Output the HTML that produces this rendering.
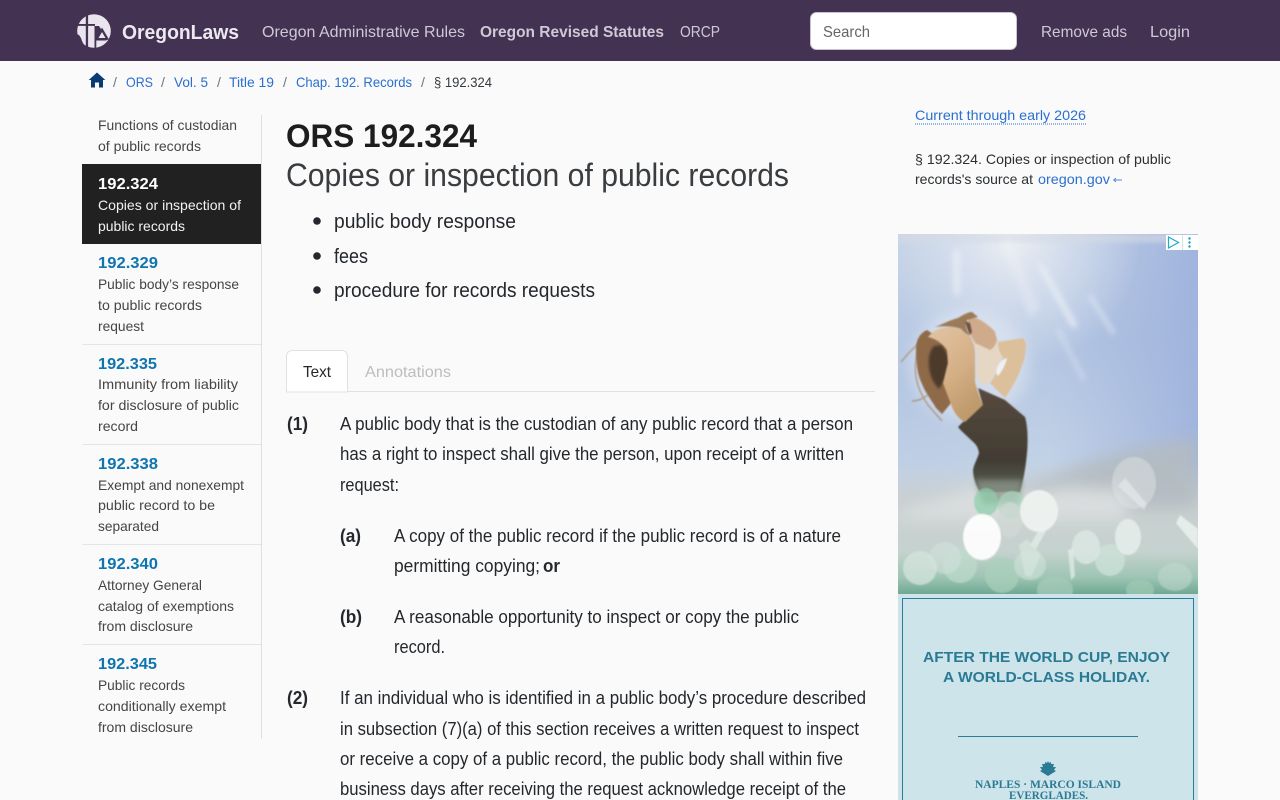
<!DOCTYPE html>
<html lang="en">
<head>
<meta charset="utf-8">
<title>ORS 192.324 - Copies or inspection of public records</title>
<style>
html,body{margin:0;padding:0;width:1280px;height:800px;overflow:hidden;background:#fafafa}
svg{position:absolute;left:0;top:0;display:block}
text{font-family:"Liberation Sans",sans-serif;white-space:pre}
.nav{font-size:16px;fill:#cfc9d6}
.bc{font-size:14px;fill:#2a6fd0}
.sep{font-size:14px;fill:#6c757d}
.s{font-size:14px;fill:#454545}
.n{font-size:16px;font-weight:700;fill:#0f75b0}
.b{font-size:18px;fill:#24282c}
.bb{font-size:18px;font-weight:700;fill:#24282c}
.li{font-size:20px;fill:#24282c}
.r{font-size:14px;fill:#2b2f33}
.ad{font-size:15px;font-weight:700;fill:#2b7a94}
.ads{font-size:12px;font-weight:700;fill:#2b7a94;font-family:"Liberation Serif",serif}
</style>
</head>
<body>
<svg width="1280" height="800" viewBox="0 0 1280 800" xmlns="http://www.w3.org/2000/svg">
<defs>
<linearGradient id="sky" x1="0" y1="0" x2="0.15" y2="1">
<stop offset="0" stop-color="#c3d1e6"/><stop offset="0.4" stop-color="#b4c6e2"/><stop offset="0.7" stop-color="#c2d2e6"/><stop offset="1" stop-color="#cdd8e2"/>
</linearGradient>
<linearGradient id="skyr" x1="0" y1="0" x2="1" y2="0">
<stop offset="0.5" stop-color="#a3b5de" stop-opacity="0"/><stop offset="1" stop-color="#9db1dc" stop-opacity=".9"/>
</linearGradient>
<radialGradient id="glow" gradientUnits="userSpaceOnUse" cx="1010" cy="240" r="130">
<stop offset="0" stop-color="#eef0f4" stop-opacity=".95"/><stop offset="0.5" stop-color="#dfe6f1" stop-opacity=".55"/><stop offset="1" stop-color="#dfe6f1" stop-opacity="0"/>
</radialGradient>
<linearGradient id="ground" x1="0" y1="0" x2="0" y2="1">
<stop offset="0" stop-color="#c9d0d2" stop-opacity="0"/><stop offset="0.3" stop-color="#c9cfd0"/><stop offset="0.68" stop-color="#c6d2cf"/><stop offset="0.88" stop-color="#9cc4b3"/><stop offset="1" stop-color="#6fa893"/>
</linearGradient>
<linearGradient id="skin" x1="0" y1="0" x2="0.5" y2="1">
<stop offset="0" stop-color="#e2c5a4"/><stop offset="0.6" stop-color="#d4ae84"/><stop offset="1" stop-color="#bf9a6c"/>
</linearGradient>
<linearGradient id="dress" x1="0" y1="0" x2="0" y2="1">
<stop offset="0" stop-color="#57493d"/><stop offset="0.7" stop-color="#423c33"/><stop offset="1" stop-color="#5d6458"/>
</linearGradient>
<filter id="bl0" x="-30%" y="-30%" width="160%" height="160%"><feGaussianBlur stdDeviation="0.7"/></filter>
<filter id="bl1" x="-30%" y="-30%" width="160%" height="160%"><feGaussianBlur stdDeviation="1.2"/></filter>
<filter id="bl2" x="-30%" y="-30%" width="160%" height="160%"><feGaussianBlur stdDeviation="3"/></filter>
<filter id="bl3" x="-50%" y="-50%" width="200%" height="200%"><feGaussianBlur stdDeviation="8"/></filter>
<clipPath id="adclip"><rect x="898" y="234" width="300" height="360"/></clipPath>
</defs>

<rect width="1280" height="800" fill="#fafafa"/>

<!-- Header -->
<rect width="1280" height="61" fill="#433252"/>
<circle cx="94" cy="31" r="16.8" fill="#e9e4ee"/>
<path d="M85.800 13h2.300v36h-2.300zM76 24h19v1.900H76z" fill="#433252"/>
<path d="M76 34l3 1 2 3 1 3 4 8H74z" fill="#433252"/>
<path d="M94.500 26h1.800v24h-1.800z" fill="#433252"/>
<path d="M96 26l3 0 9 13.500-2 1H96z" fill="#433252"/>
<path d="M102 27.500l7 12h-13z" fill="#433252"/>
<path d="M102 32l3.500 6h-7z" fill="#e9e4ee"/>
<text x="122" y="39" font-size="20" font-weight="700" fill="#ece8f0" textLength="117" lengthAdjust="spacingAndGlyphs">OregonLaws</text>
<text class="nav" x="262" y="37" textLength="203" lengthAdjust="spacingAndGlyphs">Oregon Administrative Rules</text>
<text class="nav" x="480" y="37" font-weight="700" textLength="184" lengthAdjust="spacingAndGlyphs">Oregon Revised Statutes</text>
<text class="nav" x="680" y="37" textLength="40" lengthAdjust="spacingAndGlyphs">ORCP</text>
<rect x="810.500" y="12.500" width="206" height="37" rx="6" fill="#fff" stroke="#c9c5ce"/>
<text x="823" y="37" font-size="16" fill="#666" textLength="47" lengthAdjust="spacingAndGlyphs">Search</text>
<text class="nav" x="1041" y="37" textLength="86" lengthAdjust="spacingAndGlyphs">Remove ads</text>
<text class="nav" x="1150" y="37" textLength="40" lengthAdjust="spacingAndGlyphs">Login</text>

<!-- Breadcrumb -->
<path d="M97 72.500l8.300 7.500h-2.300v7.500h-4v-5h-4v5h-4V80h-2.300z" fill="#0b3a75"/>
<text class="sep" x="113" y="87">/</text>
<text class="bc" x="126" y="87" textLength="27" lengthAdjust="spacingAndGlyphs">ORS</text>
<text class="sep" x="161" y="87">/</text>
<text class="bc" x="174" y="87" textLength="34" lengthAdjust="spacingAndGlyphs">Vol. 5</text>
<text class="sep" x="217" y="87">/</text>
<text class="bc" x="229" y="87" textLength="45" lengthAdjust="spacingAndGlyphs">Title 19</text>
<text class="sep" x="283" y="87">/</text>
<text class="bc" x="296" y="87" textLength="116" lengthAdjust="spacingAndGlyphs">Chap. 192. Records</text>
<text class="sep" x="421" y="87">/</text>
<text x="434" y="87" font-size="14" fill="#343a40" textLength="58" lengthAdjust="spacingAndGlyphs">§ 192.324</text>

<!-- Sidebar -->
<rect x="261" y="115" width="1" height="624" fill="#dedfe1"/>
<text class="s" x="98" y="130" textLength="139" lengthAdjust="spacingAndGlyphs">Functions of custodian</text>
<text class="s" x="98" y="151" textLength="103" lengthAdjust="spacingAndGlyphs">of public records</text>
<rect x="82" y="164" width="179" height="80" fill="#212121"/>
<text x="98" y="189" font-size="16" font-weight="700" fill="#fff" textLength="60" lengthAdjust="spacingAndGlyphs">192.324</text>
<text x="98" y="210" font-size="14" fill="#f2f2f2" textLength="143" lengthAdjust="spacingAndGlyphs">Copies or inspection of</text>
<text x="98" y="231" font-size="14" fill="#f2f2f2" textLength="87" lengthAdjust="spacingAndGlyphs">public records</text>

<text class="n" x="98" y="268" textLength="60" lengthAdjust="spacingAndGlyphs">192.329</text>
<text class="s" x="98" y="289" textLength="141" lengthAdjust="spacingAndGlyphs">Public body’s response</text>
<text class="s" x="98" y="310" textLength="104" lengthAdjust="spacingAndGlyphs">to public records</text>
<text class="s" x="98" y="331" textLength="46" lengthAdjust="spacingAndGlyphs">request</text>
<rect x="82" y="344" width="179" height="1" fill="#e4e5e7"/>

<text class="n" x="98" y="369" textLength="59" lengthAdjust="spacingAndGlyphs">192.335</text>
<text class="s" x="98" y="389" textLength="140" lengthAdjust="spacingAndGlyphs">Immunity from liability</text>
<text class="s" x="98" y="410" textLength="141" lengthAdjust="spacingAndGlyphs">for disclosure of public</text>
<text class="s" x="98" y="431" textLength="40" lengthAdjust="spacingAndGlyphs">record</text>
<rect x="82" y="444" width="179" height="1" fill="#e4e5e7"/>

<text class="n" x="98" y="469" textLength="60" lengthAdjust="spacingAndGlyphs">192.338</text>
<text class="s" x="98" y="490" textLength="146" lengthAdjust="spacingAndGlyphs">Exempt and nonexempt</text>
<text class="s" x="98" y="510" textLength="117" lengthAdjust="spacingAndGlyphs">public record to be</text>
<text class="s" x="98" y="531" textLength="61" lengthAdjust="spacingAndGlyphs">separated</text>
<rect x="82" y="544" width="179" height="1" fill="#e4e5e7"/>

<text class="n" x="98" y="569" textLength="60" lengthAdjust="spacingAndGlyphs">192.340</text>
<text class="s" x="98" y="590" textLength="104" lengthAdjust="spacingAndGlyphs">Attorney General</text>
<text class="s" x="98" y="611" textLength="136" lengthAdjust="spacingAndGlyphs">catalog of exemptions</text>
<text class="s" x="98" y="631" textLength="95" lengthAdjust="spacingAndGlyphs">from disclosure</text>
<rect x="82" y="644" width="179" height="1" fill="#e4e5e7"/>

<text class="n" x="98" y="669" textLength="59" lengthAdjust="spacingAndGlyphs">192.345</text>
<text class="s" x="98" y="690" textLength="87" lengthAdjust="spacingAndGlyphs">Public records</text>
<text class="s" x="98" y="711" textLength="128" lengthAdjust="spacingAndGlyphs">conditionally exempt</text>
<text class="s" x="98" y="732" textLength="95" lengthAdjust="spacingAndGlyphs">from disclosure</text>

<!-- Main heading -->
<text x="286" y="147" font-size="32" font-weight="700" fill="#1d1d1d" textLength="191" lengthAdjust="spacingAndGlyphs">ORS 192.324</text>
<text x="286" y="186" font-size="32" fill="#3a3d40" textLength="503" lengthAdjust="spacingAndGlyphs">Copies or inspection of public records</text>
<circle cx="317" cy="221" r="3.800" fill="#24282c"/>
<text class="li" x="334" y="228" textLength="182" lengthAdjust="spacingAndGlyphs">public body response</text>
<circle cx="317" cy="256" r="3.800" fill="#24282c"/>
<text class="li" x="334" y="263" textLength="34" lengthAdjust="spacingAndGlyphs">fees</text>
<circle cx="317" cy="290" r="3.800" fill="#24282c"/>
<text class="li" x="334" y="297" textLength="261" lengthAdjust="spacingAndGlyphs">procedure for records requests</text>

<!-- Tabs -->
<rect x="286" y="391" width="589" height="1" fill="#dee2e6"/>
<path d="M286.500 392V356a5.500 5.500 0 0 1 5.500-5.500h50a5.500 5.500 0 0 1 5.500 5.500v36z" fill="#fff" stroke="#dee2e6"/>
<text x="303" y="377" font-size="16" fill="#24282c" textLength="28" lengthAdjust="spacingAndGlyphs">Text</text>
<text x="365" y="377" font-size="16" fill="#bdbdbd" textLength="86" lengthAdjust="spacingAndGlyphs">Annotations</text>

<!-- Body -->
<text class="bb" x="287" y="430" textLength="21" lengthAdjust="spacingAndGlyphs">(1)</text>
<text class="b" x="340" y="430" textLength="513" lengthAdjust="spacingAndGlyphs">A public body that is the custodian of any public record that a person</text>
<text class="b" x="340" y="460" textLength="504" lengthAdjust="spacingAndGlyphs">has a right to inspect shall give the person, upon receipt of a written</text>
<text class="b" x="340" y="491" textLength="59" lengthAdjust="spacingAndGlyphs">request:</text>
<text class="bb" x="340" y="542" textLength="21" lengthAdjust="spacingAndGlyphs">(a)</text>
<text class="b" x="394" y="542" textLength="447" lengthAdjust="spacingAndGlyphs">A copy of the public record if the public record is of a nature</text>
<text class="b" x="394" y="572" textLength="146" lengthAdjust="spacingAndGlyphs">permitting copying;</text>
<text class="bb" x="543" y="572" textLength="17" lengthAdjust="spacingAndGlyphs">or</text>
<text class="bb" x="340" y="623" textLength="22" lengthAdjust="spacingAndGlyphs">(b)</text>
<text class="b" x="394" y="623" textLength="405" lengthAdjust="spacingAndGlyphs">A reasonable opportunity to inspect or copy the public</text>
<text class="b" x="394" y="653" textLength="51" lengthAdjust="spacingAndGlyphs">record.</text>
<text class="bb" x="287" y="704" textLength="21" lengthAdjust="spacingAndGlyphs">(2)</text>
<text class="b" x="340" y="704" textLength="526" lengthAdjust="spacingAndGlyphs">If an individual who is identified in a public body’s procedure described</text>
<text class="b" x="340" y="735" textLength="519" lengthAdjust="spacingAndGlyphs">in subsection (7)(a) of this section receives a written request to inspect</text>
<text class="b" x="340" y="765" textLength="503" lengthAdjust="spacingAndGlyphs">or receive a copy of a public record, the public body shall within five</text>
<text class="b" x="340" y="795" textLength="506" lengthAdjust="spacingAndGlyphs">business days after receiving the request acknowledge receipt of the</text>

<!-- Right column -->
<text x="915" y="120" font-size="14" fill="#2a6fd0" textLength="171" lengthAdjust="spacingAndGlyphs">Current through early 2026</text>
<path d="M915 124H1086" stroke="#2a6fd0" stroke-width="1" stroke-dasharray="1 1"/>
<text class="r" x="915" y="164" textLength="256" lengthAdjust="spacingAndGlyphs">§ 192.324. Copies or inspection of public</text>
<text class="r" x="915" y="184" textLength="118" lengthAdjust="spacingAndGlyphs">records's source at</text>
<text x="1038" y="184" font-size="14" fill="#2a6fd0" textLength="72" lengthAdjust="spacingAndGlyphs">oregon.gov</text>
<path d="M1113.500 180H1122M1113.500 180l2.500-1.800M1113.500 180l2.500 1.800" stroke="#5a8ad8" stroke-width="1" fill="none"/>

<!-- Ad photo -->
<g clip-path="url(#adclip)">
<rect x="898" y="234" width="300" height="360" fill="url(#sky)"/>
<rect x="898" y="234" width="300" height="360" fill="url(#skyr)"/>
<rect x="898" y="234" width="300" height="180" fill="url(#glow)"/>
<rect x="898" y="234" width="300" height="8" fill="#d6dbe4" opacity=".7" filter="url(#bl2)"/>
<!-- sun rays -->
<g filter="url(#bl2)" fill="#eef2f7">
<path d="M1036 262l8 4 34 60-6 2z" opacity=".7"/>
<path d="M1088 296l3-2 24 38-3 3z" opacity=".55"/>
<path d="M953 250h7v45h-6z" opacity=".65"/>
<path d="M1056 330l4-1 26 50-4 2z" opacity=".4"/>
<path d="M1000 240l10-2 30 70-10 10z" opacity=".35"/>
</g>
<!-- halo behind woman -->
<ellipse cx="970" cy="365" rx="60" ry="55" fill="#e6ecf4" opacity=".55" filter="url(#bl3)"/>
<!-- ground haze -->
<rect x="898" y="462" width="300" height="132" fill="url(#ground)"/>
<path d="M1025 490c30-14 60-28 90-36 30-8 60-14 83-16v70h-173z" fill="#b4bcc1" filter="url(#bl3)" opacity=".9"/>
<path d="M898 512c30-8 60-22 90-28l40 10 40-8 60 5v30H898z" fill="#d9ddde" filter="url(#bl3)"/>
<!-- wisps of hair -->
<path d="M920 345c-8 20-6 40 8 60l14 16M925 340c-14 8-20 18-24 22M928 395c-6 4-10 6-16 6" stroke="#a88460" stroke-width="1.500" fill="none" opacity=".7" filter="url(#bl0)"/>
<!-- dress -->
<path d="M978 388l27 12 20 17c3 10 3 25 2 36-1 10-2 18-4 27l-3 12-40 0c-5-8-7-16-7-22 1-6 4-10 6-17-1-8-5-10-9-14-4-4-9-8-12-12l24-24z" fill="url(#dress)" filter="url(#bl0)"/>
<path d="M975 480h48l-4 24h-36z" fill="#8d968b" filter="url(#bl2)" opacity=".75"/>
<!-- hair -->
<path d="M927 330c-7 3-11 10-11 18 0 14 1 26 6 36 3 8 8 14 14 24l6 6 10-12-6-24 4-20-4-15z" fill="#8f6b4a" filter="url(#bl0)"/>
<path d="M934 346l8-1 6 10 1 9-4 16-6 9c-5-5-9-12-10-22-1-10 1-17 5-21z" fill="#4e3a2b" filter="url(#bl1)"/>
<!-- far arm + chest -->
<path d="M972 333l26 8 2 10 3 7-7 15-6 10-9 2-5-10 1-20z" fill="#e6d7c4" filter="url(#bl1)"/>
<path d="M998 342l25-4 3 5c0 8-1 14-3 20-4 12-10 24-18 35l-15-15c5-6 10-16 13-26-3-3-5-8-5-15z" fill="#dcc09c" filter="url(#bl0)"/>
<path d="M997 368c3-7 6-9 10-10-2 8-5 13-9 18-2-2-2-5-1-8z" fill="#eef2f8" filter="url(#bl0)"/>
<!-- near arm -->
<path d="M928 337c4-5 9-8 14-9 8-2 14-1 20 2 5 2 9 5 10 10 3 6 3 11 3 17l0 25c2 8 5 16 8 23l-18 17c-6-3-10-8-13-15l-9-24 5-20-1-13c-5-7-11-11-19-13z" fill="url(#skin)" filter="url(#bl0)"/>
<!-- head -->
<path d="M968 317c6 0 12 2 17 6 4 3 8 6 10 9l2 8c-1 4-3 8-7 10l-15-7-7-13z" fill="#cfab8c" filter="url(#bl0)"/>
<path d="M935 327c8-3 15-7 23-9 5-3 10-6 14-6l6 5-11 3c-2 5-1 10 3 15-3 0-7-4-9-6-8-3-18-3-26-2z" fill="#9c7a58" filter="url(#bl0)"/>
<path d="M965 321c1 5 3 10 5 14l2-3-2-9z" fill="#6d5240" filter="url(#bl0)"/>
<!-- bokeh -->
<g filter="url(#bl0)">
<ellipse cx="920" cy="568" rx="17" ry="17" fill="#d6e4dd" opacity=".75"/>
<ellipse cx="960" cy="565" rx="17" ry="18" fill="#bedccd" opacity=".7"/>
<ellipse cx="945" cy="558" rx="16" ry="16" fill="#d3e2dc" opacity=".55"/>
<ellipse cx="1002" cy="575" rx="17" ry="18" fill="#a9d0bb" opacity=".7"/>
<ellipse cx="1055" cy="590" rx="18" ry="14" fill="#a5cab9" opacity=".75"/>
<ellipse cx="1030" cy="565" rx="16" ry="15" fill="#cfe2d8" opacity=".6"/>
<ellipse cx="1110" cy="560" rx="15" ry="16" fill="#cde3da" opacity=".75"/>
<ellipse cx="1086" cy="547" rx="14" ry="17" fill="#dbe9e3" opacity=".8"/>
<ellipse cx="1128" cy="537" rx="13" ry="18" fill="#e8f0ed" opacity=".8"/>
<ellipse cx="1134" cy="483" rx="22" ry="26" fill="#dde3e4" opacity=".5"/>
<ellipse cx="1175" cy="577" rx="17" ry="14" fill="#c3d8d0" opacity=".55"/>
<ellipse cx="1140" cy="590" rx="14" ry="10" fill="#9fcbb4" opacity=".7"/>
<ellipse cx="1012" cy="505" rx="14" ry="14" fill="#a7d8bf" opacity=".65"/>
<ellipse cx="986" cy="502" rx="12" ry="14" fill="#8ccfa9" opacity=".7"/>
<ellipse cx="1010" cy="520" rx="12" ry="18" fill="#d0d8d4" opacity=".75"/>
<path d="M1180 515l18 14v20l-22-26z" fill="#eaf2ef" opacity=".85"/>
<path d="M1030 545l12-20 4 6-10 18z M1068 550l3 30 4-4-2-28z" fill="#e5efe9" opacity=".7"/>
<path d="M1025 575l-6-30 8-6 14 16-10 22z" fill="#d9e9e0" opacity=".6"/>
<path d="M1125 478l22 26 -3 6-26-24z" fill="#eef2f2" opacity=".5"/>
<ellipse cx="982" cy="537" rx="19" ry="23" fill="#fff" opacity=".92"/>
<ellipse cx="1039" cy="511" rx="19" ry="21" fill="#eff2f0" opacity=".93"/>
</g>
<rect x="1166" y="235" width="16" height="15" fill="#fff"/>
<rect x="1182" y="235" width="16" height="15" fill="#fff"/>
<path d="M1168.500 237v11l10-5.500z" fill="none" stroke="#21a9c4" stroke-width="1.200"/>
<rect x="1182" y="235" width="1" height="15" fill="#cfe5ea"/>
<circle cx="1189.500" cy="238.500" r="1.200" fill="#1b9db8"/>
<circle cx="1189.500" cy="242.500" r="1.200" fill="#1b9db8"/>
<circle cx="1189.500" cy="246.500" r="1.200" fill="#1b9db8"/>
</g>

<!-- Ad lower panel -->
<rect x="898" y="594" width="300" height="206" fill="#cde4ea"/>
<path d="M902.500 800V598.500H1193.500V800" fill="none" stroke="#2a7d95" stroke-width="1"/>
<text class="ad" x="923" y="662" textLength="247" lengthAdjust="spacingAndGlyphs">AFTER THE WORLD CUP, ENJOY</text>
<text class="ad" x="943" y="682" textLength="207" lengthAdjust="spacingAndGlyphs">A WORLD-CLASS HOLIDAY.</text>
<rect x="958" y="736" width="180" height="1" fill="#2a7d95"/>
<path d="M1048 776l-8-5 2-1-2-3 3 0-1-3 3 0 0-2 2 1 1-2 1 2 2-1 0 2 3 0-1 3 3 0-2 3 2 1z" fill="#2b7a94"/>
<text class="ads" x="975" y="788" textLength="146" lengthAdjust="spacingAndGlyphs">NAPLES · MARCO ISLAND</text>
<text class="ads" x="1009" y="799" textLength="79" lengthAdjust="spacingAndGlyphs">EVERGLADES.</text>
</svg>
</body>
</html>
